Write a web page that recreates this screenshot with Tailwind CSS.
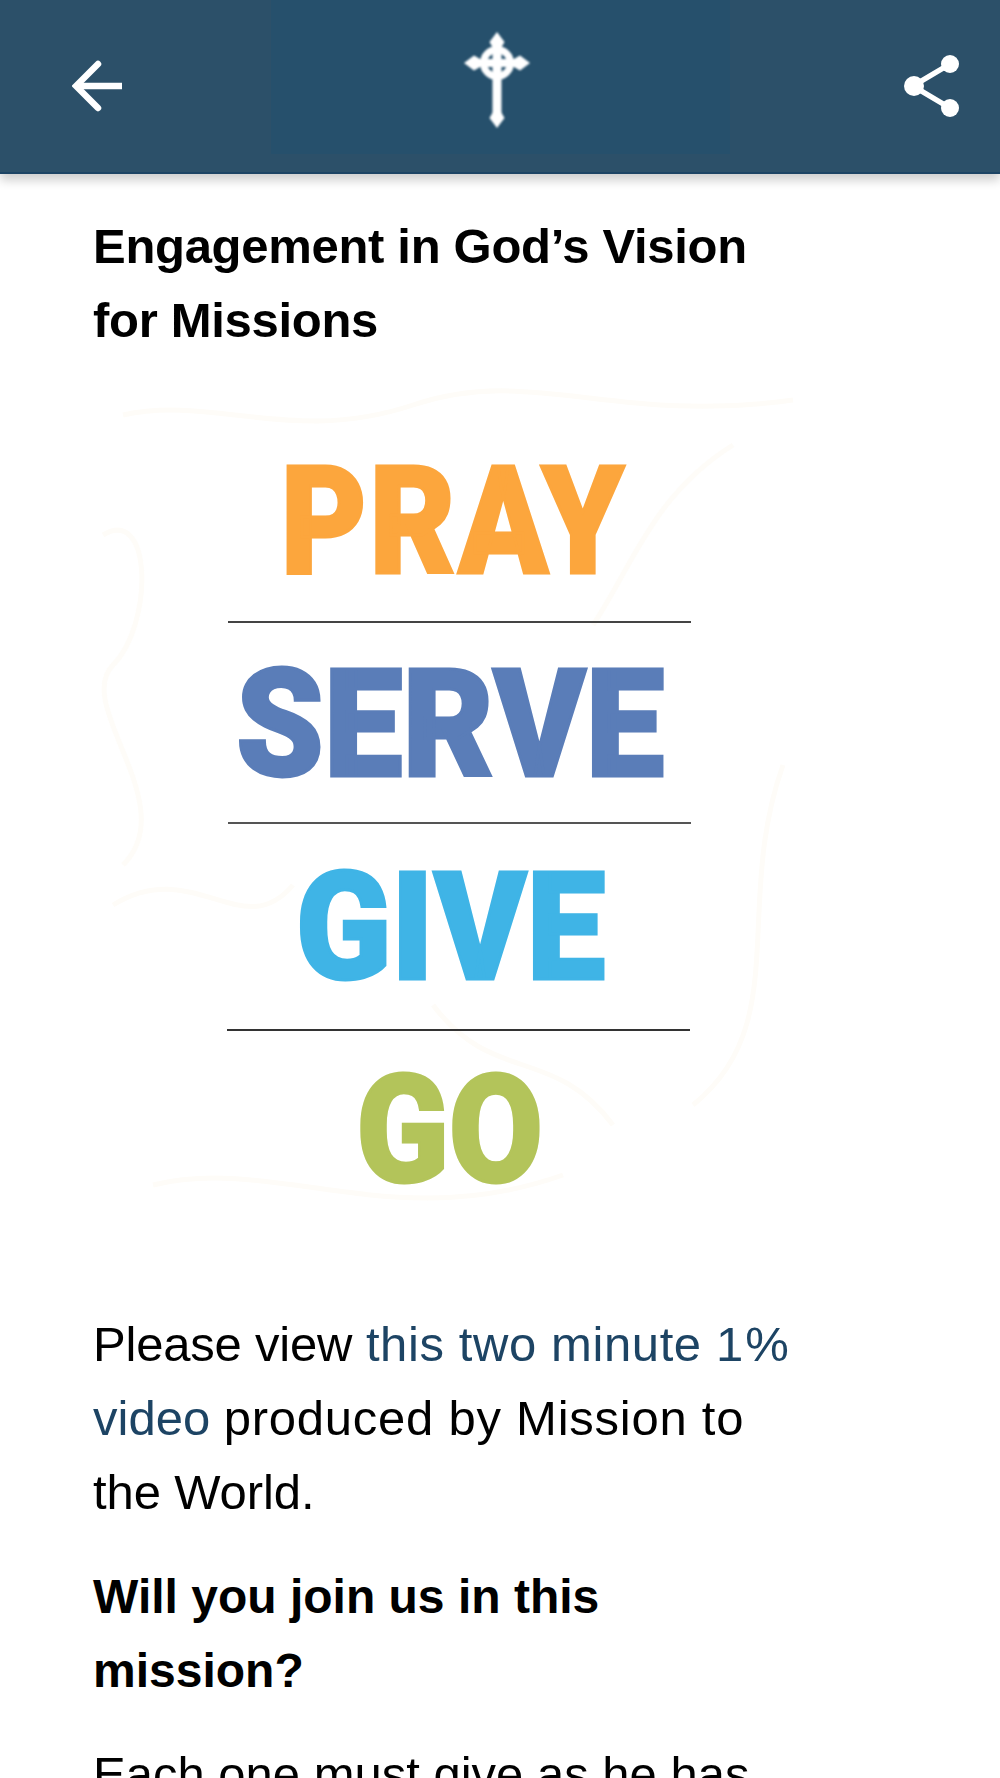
<!DOCTYPE html>
<html lang="en">
<head>
    <meta charset="UTF-8">
    <meta name="viewport" content="width=device-width, initial-scale=1.0">
    <title>Engagement in God's Vision for Missions</title>
    <script src="https://cdn.jsdelivr.net/npm/@tailwindcss/browser@4"></script>
</head>
<body class="bg-white font-['Liberation_Sans',Arial,sans-serif] text-black">

<div class="h-[1778px] w-[1000px] overflow-hidden">
    <!-- Header -->
    <header class="relative flex h-[174px] items-center justify-between border-b-2 border-[#1d4464] bg-[#2c5069] pl-[72px] pr-[40px] shadow-[0_6px_10px_rgba(0,0,0,0.2)]">
        <div class="absolute left-[271px] top-0 h-[154px] w-[459px] bg-[#26506c]"></div>
        <!-- back arrow -->
        <svg class="relative h-[52px] w-[51px]" viewBox="0 0 51 52" fill="none" stroke="white" stroke-width="6.5">
            <path d="M26 4 L4 26 L26 48" stroke-linecap="round"/>
            <path d="M4 26 H50"/>
        </svg>
        <!-- cross -->
        <svg class="relative mr-[34px] -mt-[12px] h-[96px] w-[66px] blur-[1px]" viewBox="0 0 66 96" fill="white">
            <path d="M28.5 8 h9 v80 h-9z"/>
            <path d="M33 0 l7.5 10 l-4 7 h-7 l-4 -7z"/>
            <path d="M33 96 l7.5 -10 l-4 -7 h-7 l-4 7z"/>
            <path d="M8 27 h50 v8 h-50z"/>
            <path d="M0 31 l10 -7.5 l7 4 v7 l-7 4z"/>
            <path d="M66 31 l-10 -7.5 l-7 4 v7 l7 4z"/>
            <circle cx="33" cy="31" r="13.5" fill="none" stroke="white" stroke-width="7"/>
        </svg>
        <!-- share -->
        <svg class="relative h-[62px] w-[56px]" viewBox="0 0 56 62" fill="white" stroke="white">
            <path d="M46 9 L9 31 L46 53" fill="none" stroke-width="5.5"/>
            <circle cx="46" cy="9" r="9" stroke="none"/>
            <circle cx="10" cy="31" r="10" stroke="none"/>
            <circle cx="46" cy="53" r="9" stroke="none"/>
        </svg>
    </header>

    <main class="pl-[93px] pr-[197px] pt-[35px]">
        <h1 class="text-[49px] font-bold leading-[74px] tracking-[-0.3px]">Engagement in God’s Vision for Missions</h1>

        <!-- Poster -->
        <div class="relative mt-[28px] -mr-[12px] flex h-[870px] flex-col items-center pt-[59px]">
            <!-- faint map lines behind the words -->
            <svg class="absolute inset-0 h-full w-full" viewBox="0 0 722 870" fill="none" stroke="#fefcf8" stroke-width="5">
                <path d="M30 30 C120 10 200 60 320 20 S520 40 700 15"/>
                <path d="M10 150 C60 120 60 240 20 280 S90 420 30 480"/>
                <path d="M640 60 C560 110 540 180 500 240"/>
                <path d="M20 520 C100 470 150 560 200 500"/>
                <path d="M690 380 C640 520 700 640 600 720"/>
                <path d="M60 800 C180 770 300 850 470 790"/>
                <path d="M340 620 C400 700 460 660 520 740"/>
            </svg>
            <div class="relative scale-x-[0.875] font-['Roboto'] text-[151px] font-black leading-[155px] tracking-[3px] text-[#fca63d] [-webkit-text-stroke:3px_#fca63d]">PRAY</div>
            <div class="relative ml-[10px] mt-[22px] h-[2px] w-[463px] bg-[#444]"></div>
            <div class="relative mr-[8px] mt-[24px] scale-x-[0.93] font-['Roboto'] text-[151px] font-black leading-[155px] text-[#5a7db8] [-webkit-text-stroke:3px_#5a7db8]">SERVE</div>
            <div class="relative ml-[10px] mt-[20px] h-[2px] w-[463px] bg-[#555]"></div>
            <div class="relative mr-[8px] mt-[26px] scale-x-[0.93] font-['Roboto'] text-[151px] font-black leading-[155px] text-[#3fb4e6] [-webkit-text-stroke:3px_#3fb4e6]">GIVE</div>
            <div class="relative ml-[8px] mt-[24px] h-[2px] w-[463px] bg-[#333]"></div>
            <div class="relative mr-[8px] mt-[22px] scale-x-[0.9] font-['Roboto'] text-[151px] font-black leading-[155px] text-[#b3c45a] [-webkit-text-stroke:3px_#b3c45a]">GO</div>
        </div>

        <p class="mt-[52px] text-[49px] leading-[74px]"><span class="tracking-[-0.2px]">Please view</span> <a href="#" class="tracking-[0.6px] text-[#1d4464]">this two minute <span class="tracking-[2px]">1</span>% <span class="tracking-[0px]">video</span></a> <span class="tracking-[0.75px]">produced by Mission to</span> <span class="tracking-[-0.1px]">the World.</span></p>
        <p class="mt-[31px] text-[48px] font-bold leading-[74px]">Will you join us in this mission?</p>
        <p class="mt-[29px] text-[49px] leading-[74px]">Each one must give as he has</p>
    </main>
</div>

</body>
</html>
